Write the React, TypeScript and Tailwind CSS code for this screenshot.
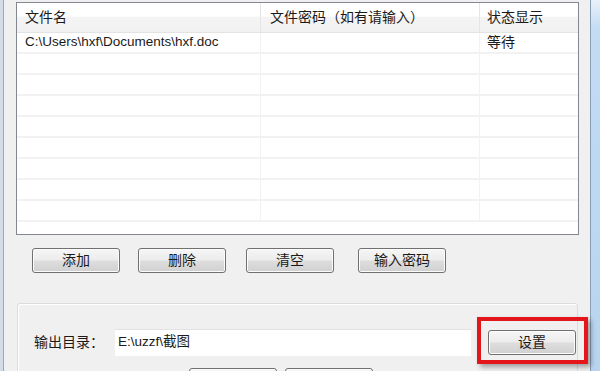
const cjk = '"Liberation Sans", "Noto Sans CJK SC", sans-serif';

const btn =
  "flex items-center justify-center h-[25px] w-[88px] shrink-0 rounded-[3px] border border-[#707070] bg-[linear-gradient(to_bottom,#f6f6f6_0%,#ececec_48%,#dedede_52%,#d0d0d0_100%)] shadow-[inset_0_0_0_1px_#fcfcfc] text-[14px] text-[#1a1a1a]";

const rows = [
  { name: "C:\\Users\\hxf\\Documents\\hxf.doc", pwd: "", status: "等待" },
  ...Array.from({ length: 8 }, () => ({ name: "", pwd: "", status: "" })),
];

export default function App() {
  return (
    <div
      className="flex h-[371px] w-[600px] overflow-hidden bg-[#f0f0f0] text-[#1a1a1a]"
      style={{ fontFamily: cjk }}
    >
      {/* left window frame */}
      <div className="w-[3px] shrink-0 bg-[#d3dde8]" />
      <div className="w-px shrink-0 bg-[#97a9bf]" />

      <div className="flex w-[586px] shrink-0 flex-col pl-[12px] pt-[2px]">
        {/* file list */}
        <div className="h-[233px] w-[563px] shrink-0 border border-[#828790] bg-white">
          <div className="flex h-[30px] border-b border-[#e3e3e3] bg-[linear-gradient(to_bottom,#ffffff_0%,#ffffff_45%,#f4f4f4_50%,#f1f1f1_100%)] text-[14px]">
            <div className="flex w-[244px] items-center border-r border-[#e5e5e5] pl-[8px]">文件名</div>
            <div className="flex w-[219px] items-center border-r border-[#e5e5e5] pl-[9px]">文件密码（如有请输入）</div>
            <div className="flex w-[97px] items-center pl-[7px]">状态显示</div>
          </div>
          {rows.map((r, i) => (
            <div key={i} className="flex h-[21px] border-b-2 border-[#f2f2f2]">
              <div className="flex w-[244px] items-center border-r border-[#f2f2f2] pl-[8px] text-[13.5px]">
                {r.name}
              </div>
              <div className="flex w-[219px] items-center border-r border-[#f2f2f2] pl-[9px] text-[13px]">{r.pwd}</div>
              <div className="flex w-[97px] items-center pl-[7px] text-[14px]">{r.status}</div>
            </div>
          ))}
        </div>

        {/* action buttons */}
        <div className="mt-[13px] flex shrink-0 pl-[16px]">
          <button className={btn}>添加</button>
          <button className={`${btn} ml-[18px]`}>删除</button>
          <button className={`${btn} ml-[20px]`}>清空</button>
          <button className={`${btn} ml-[24px]`}>输入密码</button>
        </div>

        {/* output group */}
        <div className="ml-px mt-[30px] h-[80px] w-[561px] shrink-0 rounded-[3px] border border-[#dcdcdc] shadow-[inset_1px_1px_0_#ffffff] pl-[16px] pt-[25px]">
          <div className="flex items-center">
            <span className="w-[81px] text-[14px]">输出目录：</span>
            <div className="flex h-[27px] w-[356px] items-center bg-white pl-[3px] text-[13.5px] shadow-[inset_0_1px_0_#e2e2e2]">
              E:\uzzf\截图
            </div>
            <div className="relative ml-[17px]">
              <button className={`${btn} border-[#3c8fcb] shadow-[inset_0_0_0_1px_#bfe6fa,inset_0_0_0_2px_#e2f3fc]`}>设置</button>
              <div className="absolute left-[-11px] top-[-13px] h-[47px] w-[111px] border-[4px] border-[#e5151c] shadow-[3px_3px_5px_rgba(0,0,0,0.35)]" />
            </div>
          </div>
          <div className="mt-[12px] flex pl-[155px]">
            <button className={btn} />
            <button className={`${btn} ml-[8px]`} />
          </div>
        </div>
      </div>

      {/* right window frame */}
      <div className="w-px shrink-0 bg-[#8a9db5]" />
      <div className="flex-1 bg-[linear-gradient(to_bottom,#e9f1fa_0%,#c3dbf3_8%,#b9d4f0_100%)]" />
    </div>
  );
}
